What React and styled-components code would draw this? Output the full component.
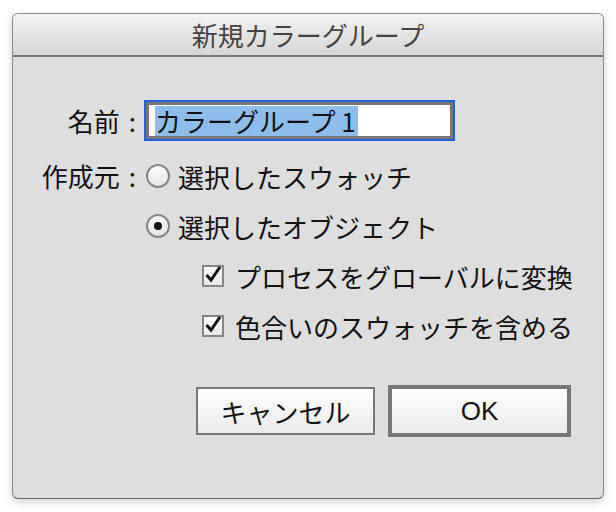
import React from 'react'
import styled, { createGlobalStyle } from 'styled-components'

const GlobalStyle = createGlobalStyle`
  html, body {
    margin: 0;
    padding: 0;
    background: #fff;
  }
  body {
    font-family: "Noto Sans CJK JP", "Liberation Sans", sans-serif;
  }
`

const Page = styled.div`
  width: 616px;
  height: 512px;
  padding: 13px 0 0 12px;
  box-sizing: border-box;
`

const Dialog = styled.div`
  width: 592px;
  height: 486px;
  box-sizing: border-box;
  border: 1px solid #8a8a8a;
  border-bottom-color: #666;
  border-radius: 6px;
  background: #dedede;
  box-shadow: 0 3px 10px rgba(0, 0, 0, 0.18);
  overflow: hidden;
  display: flex;
  flex-direction: column;
`

const TitleBar = styled.div`
  height: 41px;
  display: flex;
  align-items: center;
  justify-content: center;
  background: linear-gradient(#f3f3f3, #d6d6d6);
  border-bottom: 2px solid #767676;
  font-size: 26px;
  color: #444;
`

const Body = styled.div`
  flex: 1;
  padding: 43px 32px 0 0;
  display: flex;
  flex-direction: column;
`

const Form = styled.div`
  display: grid;
  grid-template-columns: 131px 1fr;
  row-gap: 20px;
  align-items: center;
`

const Label = styled.div`
  text-align: right;
  font-size: 26px;
  color: #111;
  padding-right: 8px;
  line-height: 30px;
  white-space: nowrap;
`

const Colon = styled.span`
  margin-left: 9px;
`

const NameInput = styled.div`
  width: 311px;
  height: 41px;
  box-sizing: border-box;
  border: 2px solid #1c62d8;
  display: flex;
`

const InputInner = styled.div`
  flex: 1;
  border: 3px solid #767676;
  background: #fff;
  display: flex;
  align-items: center;
  padding-left: 6px;
`

const Selected = styled.span`
  background: #8fbdeb;
  font-size: 26px;
  line-height: 30px;
  color: #111;
  padding-right: 2px;
  white-space: nowrap;
`

const Option = styled.label`
  display: flex;
  align-items: center;
  gap: 8px;
  height: 30px;
  font-size: 26px;
  color: #111;
  white-space: nowrap;
  margin-left: ${p => p.indent || 2}px;
`

const Radio = styled.span`
  width: 24px;
  height: 24px;
  box-sizing: border-box;
  border-radius: 50%;
  border: 2px solid #858585;
  background: linear-gradient(#fdfdfd, #e4e4e4);
  display: flex;
  align-items: center;
  justify-content: center;
  flex-shrink: 0;

  &::after {
    content: '';
    width: 8px;
    height: 8px;
    border-radius: 50%;
    background: #111;
    display: ${p => (p.checked ? 'block' : 'none')};
  }
`

const Check = styled.span`
  width: 22px;
  height: 22px;
  box-sizing: border-box;
  border: 2px solid #858585;
  background: linear-gradient(#fafafa, #e8e8e8);
  display: flex;
  align-items: center;
  justify-content: center;
  flex-shrink: 0;
  margin-right: 3px;
`

const Buttons = styled.div`
  display: flex;
  justify-content: flex-end;
  align-items: center;
  gap: 13px;
  margin-top: 44px;
`

const Button = styled.button`
  font-family: ${p => (p.latin ? '"Liberation Sans", Arial, sans-serif' : '"Noto Sans CJK JP", sans-serif')};
  font-size: 26px;
  color: #111;
  width: ${p => (p.primary ? 183 : 179)}px;
  height: ${p => (p.primary ? 52 : 48)}px;
  box-sizing: border-box;
  border: ${p => (p.primary ? 4 : 2)}px solid #777;
  background: linear-gradient(#ffffff, #eaeaea);
  padding: 0;
  cursor: pointer;
`

const CheckMark = () => (
  <svg width="19" height="19" viewBox="0 0 18 18" style={{ marginTop: -3 }}>
    <path d="M2.5 9.5 L7 14.5 L16 1.5" fill="none" stroke="#111" strokeWidth="3" strokeLinejoin="miter" />
  </svg>
)

export default function App() {
  return (
    <Page>
      <GlobalStyle />
      <Dialog>
        <TitleBar>新規カラーグループ</TitleBar>
        <Body>
          <Form>
            <Label>名前<Colon>:</Colon></Label>
            <NameInput>
              <InputInner>
                <Selected>カラーグループ 1</Selected>
              </InputInner>
            </NameInput>

            <Label>作成元<Colon>:</Colon></Label>
            <Option>
              <Radio />
              選択したスウォッチ
            </Option>

            <div />
            <Option>
              <Radio checked />
              選択したオブジェクト
            </Option>

            <div />
            <Option indent={58}>
              <Check><CheckMark /></Check>
              プロセスをグローバルに変換
            </Option>

            <div />
            <Option indent={58}>
              <Check><CheckMark /></Check>
              色合いのスウォッチを含める
            </Option>
          </Form>
          <Buttons>
            <Button>キャンセル</Button>
            <Button primary latin>OK</Button>
          </Buttons>
        </Body>
      </Dialog>
    </Page>
  )
}
